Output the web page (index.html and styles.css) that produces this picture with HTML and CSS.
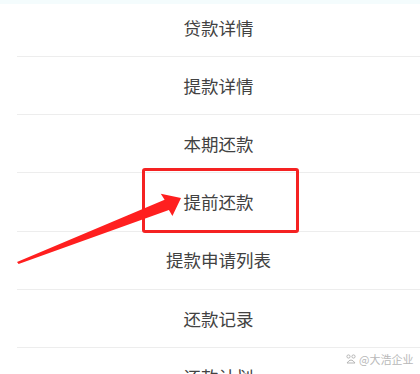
FILE: index.html
```html
<!DOCTYPE html>
<html lang="zh-CN">
<head>
<meta charset="utf-8">
<title>贷款菜单</title>
<link rel="stylesheet" href="styles.css">
</head>
<body>
<div class="page">
  <ul class="menu">
    <li class="item first">贷款详情</li>
    <li class="item">提款详情</li>
    <li class="item">本期还款</li>
    <li class="item">提前还款</li>
    <li class="item">提款申请列表</li>
    <li class="item">还款记录</li>
    <li class="item">还款计划</li>
  </ul>
  <div class="highlight"></div>
  <svg class="arrow" width="420" height="374" viewBox="0 0 420 374">
    <polygon points="17,262 164.6,199.8 160.8,193.8 181,198 172.4,216 168.9,210 18.6,264" fill="#ff1f1f"/>
  </svg>
  <div class="watermark">
    <svg class="wm-icon" width="10" height="10" viewBox="0 0 10 10">
      <circle cx="2.5" cy="2.5" r="1.6" fill="none" stroke="#b5b5b5" stroke-width="1"/>
      <circle cx="7.5" cy="2.5" r="1.6" fill="none" stroke="#b5b5b5" stroke-width="1"/>
      <path d="M1 9 Q5 3 9 9 Z" fill="none" stroke="#b5b5b5" stroke-width="1"/>
    </svg>
    <span>@大浩企业</span>
  </div>
</div>
</body>
</html>
```

FILE: styles.css
```css
html, body {
  margin: 0;
  padding: 0;
  background: #ffffff;
}
body {
  width: 420px;
  height: 374px;
  overflow: hidden;
  font-family: "Noto Sans CJK SC", "Noto Sans", sans-serif;
}
.page {
  position: relative;
  width: 420px;
  height: 374px;
  overflow: hidden;
}
.menu {
  list-style: none;
  margin: -1.6px 0 0 0;
  padding: 0 0 0 17px;
}
.item {
  box-sizing: border-box;
  height: 58.3px;
  border-bottom: 1px solid #ededed;
  display: flex;
  align-items: center;
  justify-content: center;
  font-size: 17.5px;
  color: #424242;
  line-height: 1;
}
.item.first {
  margin-left: -17px;
  padding-left: 17px;
  border-bottom: none;
  background: linear-gradient(to bottom, #f4fcfd 0, #f4fcfd 5.5px, #ffffff 6.5px);
  position: relative;
}
.item.first::after {
  content: "";
  position: absolute;
  left: 17px;
  right: 0;
  bottom: 0;
  border-bottom: 1px solid #ededed;
}
.highlight {
  position: absolute;
  left: 142px;
  top: 168px;
  width: 157px;
  height: 65px;
  box-sizing: border-box;
  border: 3px solid #f52222;
  border-radius: 3px;
}
.arrow {
  position: absolute;
  left: 0;
  top: 0;
}
.watermark {
  position: absolute;
  left: 346px;
  top: 352px;
  display: flex;
  align-items: center;
  gap: 3px;
  font-size: 11px;
  line-height: 14px;
  color: #b8b8b8;
  text-shadow: 0 0 1px #ffffff, 0 0 1px #ffffff;
}
.wm-icon {
  display: block;
}
```
